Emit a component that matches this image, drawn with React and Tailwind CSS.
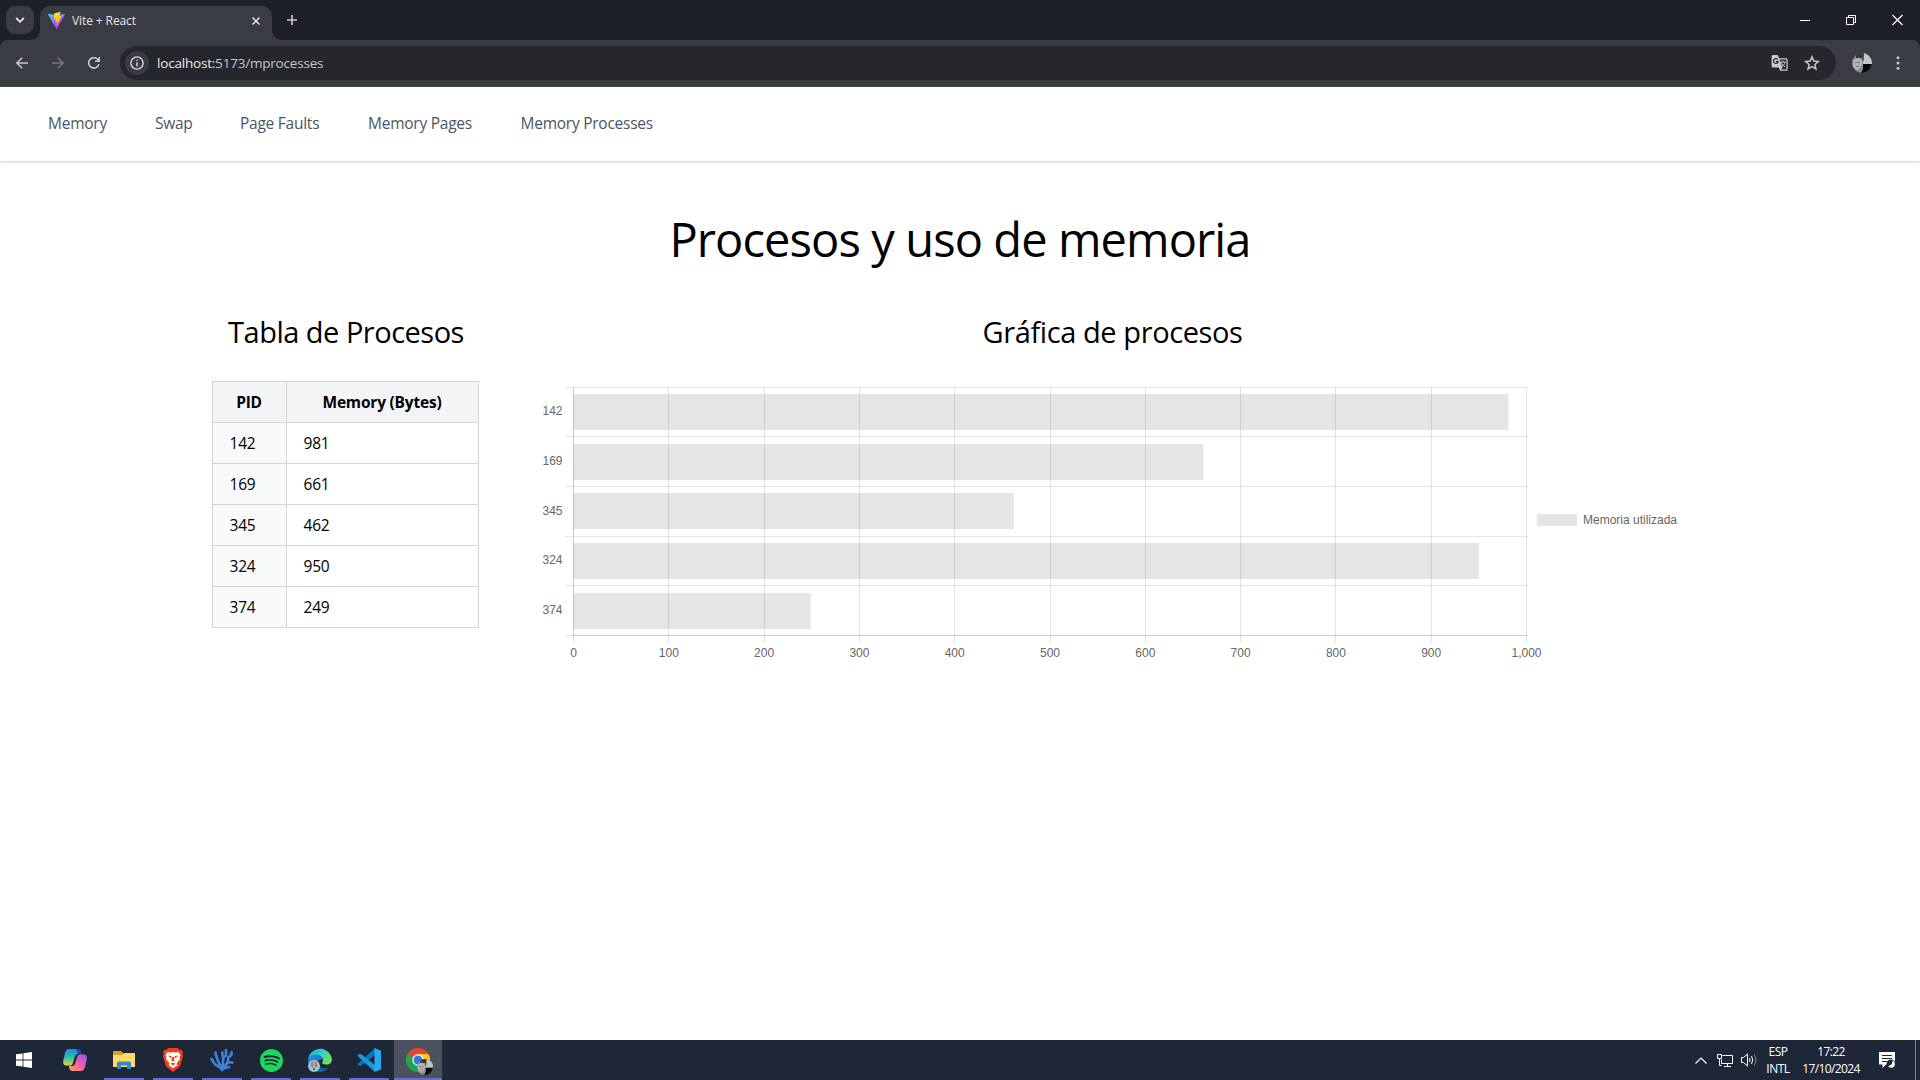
import React from "react";
import { SiSpotify } from "react-icons/si";

const processes = [
  { pid: 142, memory: 981 },
  { pid: 169, memory: 661 },
  { pid: 345, memory: 462 },
  { pid: 324, memory: 950 },
  { pid: 374, memory: 249 },
];

const navLinks = [
  { label: "Memory", width: "w-[59px]" },
  { label: "Swap", width: "w-[37px]" },
  { label: "Page Faults", width: "w-[80px]" },
  { label: "Memory Pages", width: "w-[104.5px]" },
  { label: "Memory Processes", width: "w-[132px]" },
];

function Avatar({ size }) {
  return (
    <svg width={size} height={size} viewBox="0 0 20 20">
      <defs>
        <clipPath id={`face${size}`}><circle cx="10" cy="10" r="10" /></clipPath>
      </defs>
      <g clipPath={`url(#face${size})`}>
        <rect width="20" height="20" fill="#8b8b8b" />
        <rect x="11" width="9" height="11" fill="#c4c4c4" />
        <path d="M11 11h9v9H9l2-4z" fill="#080808" />
        <path d="M4 0h8l-.5 9-1.500-4-6 0z" fill="#383838" />
        <path d="M1 7l6-2.500 3.500 4-1.500 6-4 3-4-4z" fill="#b4b4b4" />
        <path d="M3 9.500h5M4 13.500h4" stroke="#777" strokeWidth="1" />
      </g>
    </svg>
  );
}

function ViteLogo() {
  return (
    <svg width="17" height="17" viewBox="0 0 256 257">
      <defs>
        <linearGradient id="va" x1="-.8%" x2="57.6%" y1="7.6%" y2="78.4%">
          <stop offset="0%" stopColor="#41D1FF" />
          <stop offset="100%" stopColor="#BD34FE" />
        </linearGradient>
        <linearGradient id="vb" x1="43.4%" x2="50.3%" y1="2.2%" y2="89%">
          <stop offset="0%" stopColor="#FFEA83" />
          <stop offset="8.3%" stopColor="#FFDD35" />
          <stop offset="100%" stopColor="#FFA800" />
        </linearGradient>
      </defs>
      <path fill="url(#va)" d="M255.153 37.938L134.897 252.976c-2.483 4.44-8.862 4.466-11.382.048L.875 37.958c-2.746-4.814 1.371-10.646 6.827-9.67l120.385 21.517a6.537 6.537 0 0 0 2.322-.004l117.867-21.483c5.438-.991 9.574 4.796 6.877 9.62Z" />
      <path fill="url(#vb)" d="M185.432.063L96.44 17.501a3.268 3.268 0 0 0-2.634 3.014l-5.474 92.456a3.268 3.268 0 0 0 3.997 3.378l24.777-5.718c2.318-.535 4.413 1.507 3.936 3.838l-7.361 36.047c-.495 2.426 1.782 4.5 4.151 3.78l15.304-4.649c2.372-.72 4.652 1.36 4.15 3.788l-11.698 56.621c-.732 3.542 3.979 5.473 5.943 2.437l1.313-2.028l72.516-144.72c1.215-2.423-.88-5.186-3.54-4.672l-25.505 4.922c-2.396.462-4.435-1.77-3.759-4.114l16.646-57.705c.677-2.35-1.37-4.583-3.769-4.113Z" />
    </svg>
  );
}

function TabStrip() {
  return (
    <div className="flex h-10 items-start bg-[#1d2027] pt-1.5">
      <div className="ml-1.5 flex size-7 items-center justify-center rounded-[9px] bg-[#3a3c43]">
        <svg width="10" height="6" viewBox="0 0 10 6" fill="none" stroke="#e6e6e8" strokeWidth="1.8"><path d="M1.2 1L5 4.8L8.8 1" /></svg>
      </div>
      <svg className="-ml-1" width="10" height="34" viewBox="0 0 10 34"><path d="M0 34a10 10 0 0 0 10-10v10z" fill="#3a3c43" /></svg>
      <div className="flex h-[34px] w-[232px] items-center rounded-t-[10px] bg-[#3a3c43] pb-[5px] pl-2">
        <ViteLogo />
        <span className="ml-[7px] flex-1 font-['Open_Sans'] text-[12px] tracking-[-0.1px] text-[#e3e3e6]">Vite + React</span>
        <svg className="mr-3" width="8" height="8" viewBox="0 0 8 8" stroke="#e6e6e8" strokeWidth="1.5"><path d="M.5.5l7 7M7.5.5l-7 7" /></svg>
      </div>
      <svg width="10" height="34" viewBox="0 0 10 34"><path d="M10 34A10 10 0 0 1 0 24v10z" fill="#3a3c43" /></svg>
      <svg className="ml-[5px] mt-[9px]" width="10" height="10" viewBox="0 0 10 10" stroke="#c9cacd" strokeWidth="1.6"><path d="M5 0v10M0 5h10" /></svg>
      <div className="ml-auto mr-[17px] flex items-center gap-[35px] pt-2">
        <svg className="mr-px" width="10" height="12" viewBox="0 0 10 12" stroke="#fff"><path d="M0 6.5h10" /></svg>
        <svg width="11" height="12" viewBox="0 0 11 12" fill="none" stroke="#fff"><path d="M.5 3.500h7v7h-7zM2.500 3.500v-2h7v7h-2" /></svg>
        <svg width="11" height="12" viewBox="0 0 11 12" stroke="#fff" strokeWidth="1.1"><path d="M.5 1l10 10M10.5 1l-10 10" /></svg>
      </div>
    </div>
  );
}

function TranslateIcon() {
  return (
    <svg width="18" height="18" viewBox="0 0 18 18">
      <path d="M1.8 1h5l1.3 3.2H15.500a1.200 1.200 0 0 1 1.200 1.200v10.200a1.200 1.200 0 0 1-1.200 1.200H9L7.900 13.500H1.800A1.200 1.200 0 0 1 .6 12.300V2.200A1.200 1.200 0 0 1 1.800 1z" fill="#c7c8ca" />
      <path d="M8.600 5.400h6.900v10.200H10l1.500-1.900z" fill="#292a2f" />
      <path d="M6.900 5.700A2.400 2.400 0 1 0 7.200 7.600H5" stroke="#292a2f" fill="none" strokeWidth="1.200" />
      <path d="M9.300 8h5.700M12.200 6.800V8M10.200 8.200c.7 2 2 3.600 4 4.800M14 8.200c-.5 2-1.500 3.600-3.500 4.800" stroke="#c7c8ca" fill="none" strokeWidth="1" />
    </svg>
  );
}

function Toolbar() {
  return (
    <div className="bg-[#1d2027]">
      <div className="flex h-[47px] items-start rounded-t-[8px] border-b border-[#49474a] bg-[#3a3c43] pt-1.5">
        <div className="flex h-[34px] w-[120px] items-center pl-4">
          <svg width="12" height="12" viewBox="0 0 12 12" fill="none" stroke="#c9cacd" strokeWidth="1.500"><path d="M12 6H1M6.200.7L.9 6l5.300 5.300" /></svg>
          <svg className="ml-6" width="12" height="12" viewBox="0 0 12 12" fill="none" stroke="#77787d" strokeWidth="1.500"><path d="M0 6h11M5.800.7L11.100 6l-5.300 5.300" /></svg>
          <svg className="ml-6" width="12" height="12" viewBox="0 0 12 12" fill="none" stroke="#c9cacd" strokeWidth="1.600"><path d="M10.900 7.300A5.200 5.200 0 1 1 9.700 2.300L11.200 4M11.300 0v4.300H7" /></svg>
        </div>
        <div className="flex h-[34px] w-[1716px] items-center rounded-full bg-[#25272d] pl-[5px] pr-4">
          <div className="flex size-6 items-center justify-center rounded-full bg-[#3a3c43]">
            <svg width="14" height="14" viewBox="0 0 14 14" fill="none" stroke="#d7d8da" strokeWidth="1.400"><circle cx="7" cy="7" r="6.100" /><path d="M7 6.200v4M7 3.700v1.400" strokeWidth="1.500" /></svg>
          </div>
          <span className="ml-2 flex-1 font-['Open_Sans'] text-[13.500px] tracking-[-0.2px] text-[#c3c4c7]"><span className="text-[#e8e8ea]">localhost:</span>5173/mprocesses</span>
          <TranslateIcon />
          <svg className="ml-[15px]" width="16" height="16" viewBox="0 0 16 16" fill="none" stroke="#c7c8ca" strokeWidth="1.500"><path d="M8 1.900l1.800 4.200 4.500.4-3.400 3 1 4.500L8 11.700l-3.900 2.300 1-4.500-3.400-3 4.500-.4z" /></svg>
        </div>
        <div className="flex h-[34px] items-center pl-4">
          <Avatar size={20} />
          <svg className="ml-6" width="4" height="14" viewBox="0 0 4 14" fill="#c7c8ca"><circle cx="2" cy="1.700" r="1.500" /><circle cx="2" cy="7" r="1.500" /><circle cx="2" cy="12.300" r="1.500" /></svg>
        </div>
      </div>
    </div>
  );
}

function NavBar() {
  return (
    <nav className="flex h-[74px] items-center gap-12 bg-white pl-12 shadow-[0_1px_3px_rgba(0,0,0,0.2)]">
      {navLinks.map((link) => (
        <a key={link.label} className={`${link.width} whitespace-nowrap text-[15.5px] tracking-[-0.25px] text-[#4b5563]`}>{link.label}</a>
      ))}
    </nav>
  );
}

function ProcessTable() {
  return (
    <table className="mr-0.5 w-[267px] table-fixed border-collapse border border-gray-300 text-[15.5px] leading-6 tracking-[-0.2px] text-black">
      <thead>
        <tr className="h-[41px] bg-gray-100">
          <th className="w-[74px] border border-gray-300 font-bold">PID</th>
          <th className="border border-gray-300 font-bold">Memory (Bytes)</th>
        </tr>
      </thead>
      <tbody>
        {processes.map((row) => (
          <tr key={row.pid} className="h-[41px]">
            <td className="border border-gray-300 bg-gray-50 px-[17px]">{row.pid}</td>
            <td className="border border-gray-300 px-[17px]">{row.memory}</td>
          </tr>
        ))}
      </tbody>
    </table>
  );
}

const rowLines = [7.5, 56.5, 106.5, 156.5, 205.5, 255.5];
const barTops = [14, 64, 113, 163, 213];
const labelBaselines = [35, 85, 135, 184, 234];
const columns = [0, 100, 200, 300, 400, 500, 600, 700, 800, 900, 1000];
const scaleX = (value) => 33.5 + value * 0.953;

function ProcessChart() {
  return (
    <svg width="1145" height="285" viewBox="0 0 1145 285" fontFamily="Liberation Sans, Arial, sans-serif" fontSize="12" fill="#666">
      <g stroke="#000" strokeOpacity="0.1">
        {columns.map((c) => (
          <path key={c} d={`M${Math.floor(scaleX(c)) + 0.5} 7V263`} />
        ))}
        {rowLines.map((y) => (
          <path key={y} d={`M25 ${y}H987`} />
        ))}
        <path d="M33.5 7V256M33 255.500H987" />
      </g>
      {processes.map((row, i) => (
        <React.Fragment key={row.pid}>
          <rect x="33.500" y={barTops[i]} width={row.memory * 0.953} height="36" fillOpacity="0.1" fill="#000" />
          <text x="22.500" y={labelBaselines[i]} textAnchor="end">{row.pid}</text>
        </React.Fragment>
      ))}
      {columns.map((c) => (
        <text key={c} x={scaleX(c)} y="277" textAnchor="middle">{c.toLocaleString("en-US")}</text>
      ))}
      <rect x="997" y="134" width="40" height="12" fill="#e5e5e5" />
      <text x="1043" y="144">Memoria utilizada</text>
    </svg>
  );
}

function TaskButton({ children, active }) {
  return (
    <div className={active ? "ml-[5px] flex h-10 w-12 flex-col items-center bg-[#4c525d]" : "ml-[9px] flex h-10 w-10 flex-col items-center"}>
      <div className="flex h-[38px] items-center justify-center pt-0.5">{children}</div>
      <div className="h-0.5 w-full bg-[#686bd5]" />
    </div>
  );
}

function Taskbar() {
  return (
    <footer className="flex h-10 items-center bg-[#1d2737] font-['Open_Sans'] text-white">
      <svg className="ml-4" width="16" height="16" viewBox="0 0 16 16" fill="#fff"><path d="M0 2.300L6.600 1.400v6.200H0zM7.400 1.300L16 0v7.600H7.400zM0 8.400h6.600v6.200L0 13.700zM7.400 8.400H16V16l-8.600-1.300z" /></svg>
      <svg className="ml-[31px]" width="24" height="22" viewBox="0 0 24 22">
        <defs>
          <linearGradient id="c1" x1="0" y1="0" x2="0" y2="1"><stop stopColor="#2088e8" /><stop offset=".5" stopColor="#26bfb0" /><stop offset="1" stopColor="#e8d832" /></linearGradient>
          <linearGradient id="c2" x1="1" y1="0" x2="0" y2="1"><stop stopColor="#a04ff0" /><stop offset=".5" stopColor="#ef5fa5" /><stop offset="1" stopColor="#ffa45a" /></linearGradient>
        </defs>
        <path d="M6 0h8.500c2 0 2.700 1.200 3.300 3l.6 2H15c-2 0-2.700 1-3.300 3l-1.900 6.200c-.5 1.600-1.500 2.300-3 2.300H3.200C.7 16.500-.2 14.500.2 12L2 4C2.700 1.200 4 0 6 0z" fill="url(#c1)" />
        <path d="M18 22H9.500c-2 0-2.700-1.200-3.300-3l-.6-2H9c2 0 2.700-1 3.300-3l1.900-6.200c.5-1.600 1.500-2.300 3-2.300h3.600c2.500 0 3.400 2 3 4.500L22 18c-.7 2.800-2 4-4 4z" fill="url(#c2)" />
        <path d="M13 0h1.500c2 0 2.700 1.200 3.300 3l.6 2H15z" fill="#1649b8" />
      </svg>
      <div className="ml-2 flex">
        <TaskButton>
          <svg width="22" height="18" viewBox="0 0 22 18"><path d="M0 1a1 1 0 0 1 1-1h7l2 2v4H0z" fill="#dca01c" /><path d="M0 4h9l2-2h10a1 1 0 0 1 1 1v13H0z" fill="#ffd867" /><path d="M4 18v-6a1.500 1.500 0 0 1 1.500-1.500h11A1.500 1.500 0 0 1 18 12v6h-4v-3.500H8V18z" fill="#3488cf" /></svg>
        </TaskButton>
        <TaskButton>
          <svg width="20" height="24" viewBox="0 0 20 24"><path d="M5.200 0h9.600l1.900 2.100 1.700-.4L20 4l-.7 2 .7 2-3 10.500L10 24l-7-5.500L0 8l.7-2L0 4l1.600-2.300 1.700.4z" fill="#f53d12" /><path d="M4.500 4l3.200.5L10 4l2.300.5 3.200-.5 2 3-1 2.200.5 1.800-3.300 4.200.7 2L10 20.200l-4.400-3 .7-2L3 11l.5-1.800-1-2.200z" fill="#fff" /><path d="M5 7.500l3.500.8-.5 2.200zM15 7.500l-3.500.8.500 2.200zM9 9h2l.5 3.500L10 13.700l-1.500-1.200zM7.500 15.500L10 14.700l2.500.8L10 17.600z" fill="#f53d12" /></svg>
        </TaskButton>
        <TaskButton>
          <svg width="24" height="24" viewBox="0 0 24 24" fill="none" stroke="#3d82d8" strokeWidth="2.700" strokeLinecap="round" strokeLinejoin="round"><path d="M12 22C10.500 17.500 4 18.500 2.800 12.500L1.500 11M12 21C10 17 8.500 15 7.500 11.500S5.500 7 5.500 4.500M12 22c.500-5 1.500-7.500 1-12.500-.2-2-.8-3-.7-5M13.200 9.500L16 7.500V2M12.500 21c1.500-4 5-3.500 5.500-8l.2-3.500L21.500 7V4M17.500 14.500h5M13 20.500l6-1.500" /></svg>
        </TaskButton>
        <TaskButton>
          <SiSpotify size={23} color="#1ed760" />
        </TaskButton>
        <TaskButton>
          <svg width="24" height="24" viewBox="0 0 24 24">
            <defs>
              <linearGradient id="e1" x1="0" y1="0" x2="1" y2=".5"><stop stopColor="#249ee0" /><stop offset=".5" stopColor="#32c8cc" /><stop offset="1" stopColor="#66e35a" /></linearGradient>
              <linearGradient id="e2" x1="0" y1="0" x2="1" y2="1"><stop stopColor="#1d9ce8" /><stop offset="1" stopColor="#114a98" /></linearGradient>
            </defs>
            <path d="M1 8A12 12 0 0 1 24 11.500c0 3-2.300 5-5.500 5-2.500 0-4.500-.8-4.500-1.800 0-.7 1-1.200 1-2.700C15 9 11.500 7 8 7 5 7 2 8.500 0 11.500z" fill="url(#e1)" />
            <path d="M0 11.500C2 8 5 7 8 7c3.500 0 6.500 1.800 7 4.500-4-.5-5.800 1.500-5.400 4 .5 3.500 5 6 11.400 3.800C18.500 22.500 15.500 24 12 24A12 12 0 0 1 0 11.500z" fill="url(#e2)" />
            <circle cx="6" cy="18" r="6" fill="#8fc9d6" /><circle cx="6" cy="16.500" r="3.200" fill="#b5669c" /><path d="M6 13.500v6" stroke="#efb94a" strokeWidth="1.500" /><path d="M5 20.500h2v1.500H5z" fill="#704629" />
          </svg>
        </TaskButton>
        <TaskButton>
          <svg width="24" height="24" viewBox="0 0 24 24"><path d="M18 0L.3 16.200 2.300 18l2-.2L18 7z" fill="#0873b8" /><path d="M18 24L.3 7.800 2.300 6l2 .2L18 17z" fill="#139be2" /><path d="M17.500 0L24 2.700v18.600L17.500 24z" fill="#28aaf3" /></svg>
        </TaskButton>
        <TaskButton active>
          <div className="relative size-6">
            <svg width="24" height="24" viewBox="0 0 24 24"><path d="M12 12L1.600 6A12 12 0 0 1 22.400 6z" fill="#e84435" /><path d="M12 12V6h10.400A12 12 0 0 1 12 24z" fill="#fbc916" /><path d="M12 12l3 6-3 6A12 12 0 0 1 1.600 6z" fill="#25a350" /><circle cx="12" cy="12" r="5.700" fill="#fff" /><circle cx="12" cy="12" r="4.500" fill="#3178e6" /></svg>
            <div className="absolute -bottom-[3px] -right-[3px]"><Avatar size={16} /></div>
          </div>
        </TaskButton>
      </div>
      <div className="ml-auto flex h-full items-center">
        <svg width="12" height="7" viewBox="0 0 12 7" fill="none" stroke="#fff" strokeWidth="1.200"><path d="M.5 6.500L6 1l5.500 5.500" /></svg>
        <svg className="ml-2.5" width="17" height="15" viewBox="0 0 17 15" fill="none" stroke="#fff"><path d="M5.500 2.500h10v8h-11v-4M10.500 10.500v3M7 13.500h7M.5 1.500h4v4h-4zM2.500 5.500v7h2" /></svg>
        <svg className="ml-[7px]" width="17" height="14" viewBox="0 0 17 14" fill="none" stroke="#fff"><path d="M.5 4.500h2L6.500 1v12l-4-3.500h-2zM8.500 5q1.200 2 0 4M10.500 3q2.500 4 0 8" /><path d="M13 1q4 6 0 12" stroke="#7c8492" /></svg>
        <div className="ml-1.5 w-[28px] text-center text-[12px] leading-[17px] tracking-[-0.5px]">ESP<br />INTL</div>
        <div className="ml-[9px] w-[60px] whitespace-nowrap text-center text-[12px] leading-[17px] tracking-[-0.6px]">17:22<br />17/10/2024</div>
        <svg className="ml-[18px]" width="17" height="17" viewBox="0 0 17 17"><path d="M0 0h16v12.500H7L3.500 16v-3.500H0z" fill="#fff" /><path d="M3 3.500h10M3 6.500h10M3 9.500h5" stroke="#1d2737" /><circle cx="12" cy="12" r="4.500" fill="#1d2737" /><path d="M13 8.500a3.700 3.700 0 1 1-4 5.500 4 4 0 0 0 4-5.500z" fill="#fff" /></svg>
        <div className="ml-[19px] mr-[4px] h-full w-px bg-[#7a818c]" />
      </div>
    </footer>
  );
}

export default function App() {
  return (
    <div className="flex h-[1080px] w-[1920px] flex-col overflow-hidden bg-white font-['Open_Sans',sans-serif]">
      <TabStrip />
      <Toolbar />
      <NavBar />
      <main className="flex flex-1 flex-col">
        <h1 className="mt-12 text-center text-[47px] leading-[60px] tracking-[-0.9px] text-black">Procesos y uso de memoria</h1>
        <div className="mx-auto mt-[45px] flex w-[1500px]">
          <section className="flex w-[272px] flex-col items-center">
            <h2 className="mb-[31px] text-[29px] leading-9 tracking-[-0.5px] text-black">Tabla de Procesos</h2>
            <ProcessTable />
          </section>
          <section className="ml-[58px] flex flex-col items-center">
            <h2 className="mb-[30px] text-[29px] leading-9 tracking-[-0.4px] text-black">Gráfica de procesos</h2>
            <ProcessChart />
          </section>
        </div>
      </main>
      <Taskbar />
    </div>
  );
}
